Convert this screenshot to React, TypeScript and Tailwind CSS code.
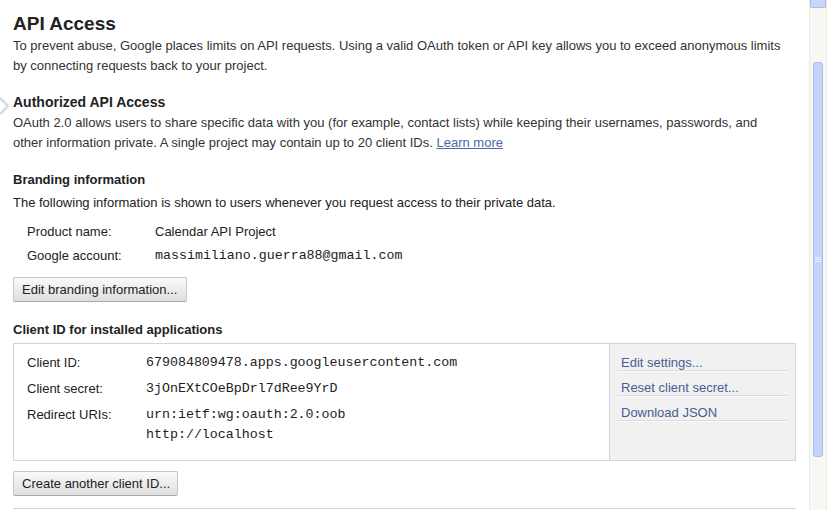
import React from "react";

const sans = "font-['Liberation_Sans',Arial,sans-serif]";
const mono = "font-['Liberation_Mono','Courier_New',monospace]";

const Button: React.FC<{ label: string; width: string }> = ({ label, width }) => (
  <button
    className={`${width} h-[25px] rounded-[2px] border border-[#c6c6c6] border-b-[#a9a9a9] bg-gradient-to-b from-[#fafafa] to-[#dedede] pl-[8px] text-left text-[13px] leading-[22px] text-[#222]`}
  >
    {label}
  </button>
);

const ActionLink: React.FC<{ label: string }> = ({ label }) => (
  <div className="mx-[7px] h-[25px] border-b border-[#dcdcdc] pl-[4px] pt-[8px] leading-[18px] text-[#4a5d91] shadow-[0_1px_0_#fafafa]">
    {label}
  </div>
);

const Scrollbar = () => (
  <div className="flex w-[18px] shrink-0 flex-col border-x border-[#ebebe6] bg-[#f7f7f4]">
    <div className="h-[8px] rounded-b-[2px] border border-t-0 border-[#a9bde8] bg-[#c8d6f8]" />
    <div className="h-[54px]" />
    <div className="mx-[3px] flex h-[395px] items-center justify-center rounded-[3px] border border-[#a6bbea] bg-[#c3d4fb]">
      <div className="flex w-[6px] flex-col gap-[1px]">
        <div className="h-px bg-[#e9effd]" />
        <div className="h-px bg-[#e9effd]" />
        <div className="h-px bg-[#e9effd]" />
      </div>
    </div>
  </div>
);

export default function App() {
  return (
    <div className={`flex h-[510px] w-[831px] overflow-hidden bg-white pr-[4px] ${sans}`}>
      <div className="relative flex-1 pl-[13px] pr-[13px] text-[13px] leading-5 text-[#222]">
        <svg className="absolute left-0 top-[97px]" width="9" height="18" viewBox="0 0 9 18">
          <path d="M0 1 L8 9 L0 17" fill="none" stroke="#d3dcea" strokeWidth="2.5" />
        </svg>

        <h1 className="pt-[12px] text-[19px] font-bold leading-6">API Access</h1>
        <p className="text-[#333]">
          To prevent abuse, Google places limits on API requests. Using a valid OAuth token or API key allows you to exceed anonymous limits
          <br />
          by connecting requests back to your project.
        </p>

        <h2 className="mt-[16px] text-[14px] font-bold leading-5">Authorized API Access</h2>
        <p className="mt-px text-[#333]">
          OAuth 2.0 allows users to share specific data with you (for example, contact lists) while keeping their usernames, passwords, and
          <br />
          other information private. A single project may contain up to 20 client IDs.{" "}
          <a className="text-[#4a6aa5] underline" href="#">
            Learn more
          </a>
        </p>

        <h3 className="mt-[17px] font-bold">Branding information</h3>
        <p className="mt-[3px]">The following information is shown to users whenever you request access to their private data.</p>

        <div className="mt-[9px] flex flex-col gap-1 pl-[14px]">
          <div className="flex">
            <span className="w-[128px]">Product name:</span>
            <span>Calendar API Project</span>
          </div>
          <div className="flex">
            <span className="w-[128px]">Google account:</span>
            <span className={`${mono} text-[13.3px]`}>massimiliano.guerra88@gmail.com</span>
          </div>
        </div>

        <div className="mt-[11px]">
          <Button label="Edit branding information..." width="w-[174px]" />
        </div>

        <h3 className="mt-[18px] font-bold">Client ID for installed applications</h3>

        <div className="mt-[3px] flex h-[118px] border border-[#d4d4d4]">
          <div className="flex flex-1 flex-col gap-[6px] pl-[13px] pt-[9px]">
            <div className="flex">
              <span className="w-[119px]">Client ID:</span>
              <span className={`${mono} text-[13.3px]`}>679084809478.apps.googleusercontent.com</span>
            </div>
            <div className="flex">
              <span className="w-[119px]">Client secret:</span>
              <span className={`${mono} text-[13.3px]`}>3jOnEXtCOeBpDrl7dRee9YrD</span>
            </div>
            <div className="flex">
              <span className="w-[119px]">Redirect URIs:</span>
              <div className={`${mono} text-[13.3px]`}>
                <div>urn:ietf:wg:oauth:2.0:oob</div>
                <div>http://localhost</div>
              </div>
            </div>
          </div>
          <div className="w-[186px] border-l border-[#d4d4d4] bg-[#f1f1f1] pt-[2px]">
            <ActionLink label="Edit settings..." />
            <ActionLink label="Reset client secret..." />
            <ActionLink label="Download JSON" />
          </div>
        </div>

        <div className="mt-[10px]">
          <Button label="Create another client ID..." width="w-[165px]" />
        </div>

        <div className="mt-[12px] border-t border-[#cbd6e4]" />
      </div>
      <Scrollbar />
    </div>
  );
}
